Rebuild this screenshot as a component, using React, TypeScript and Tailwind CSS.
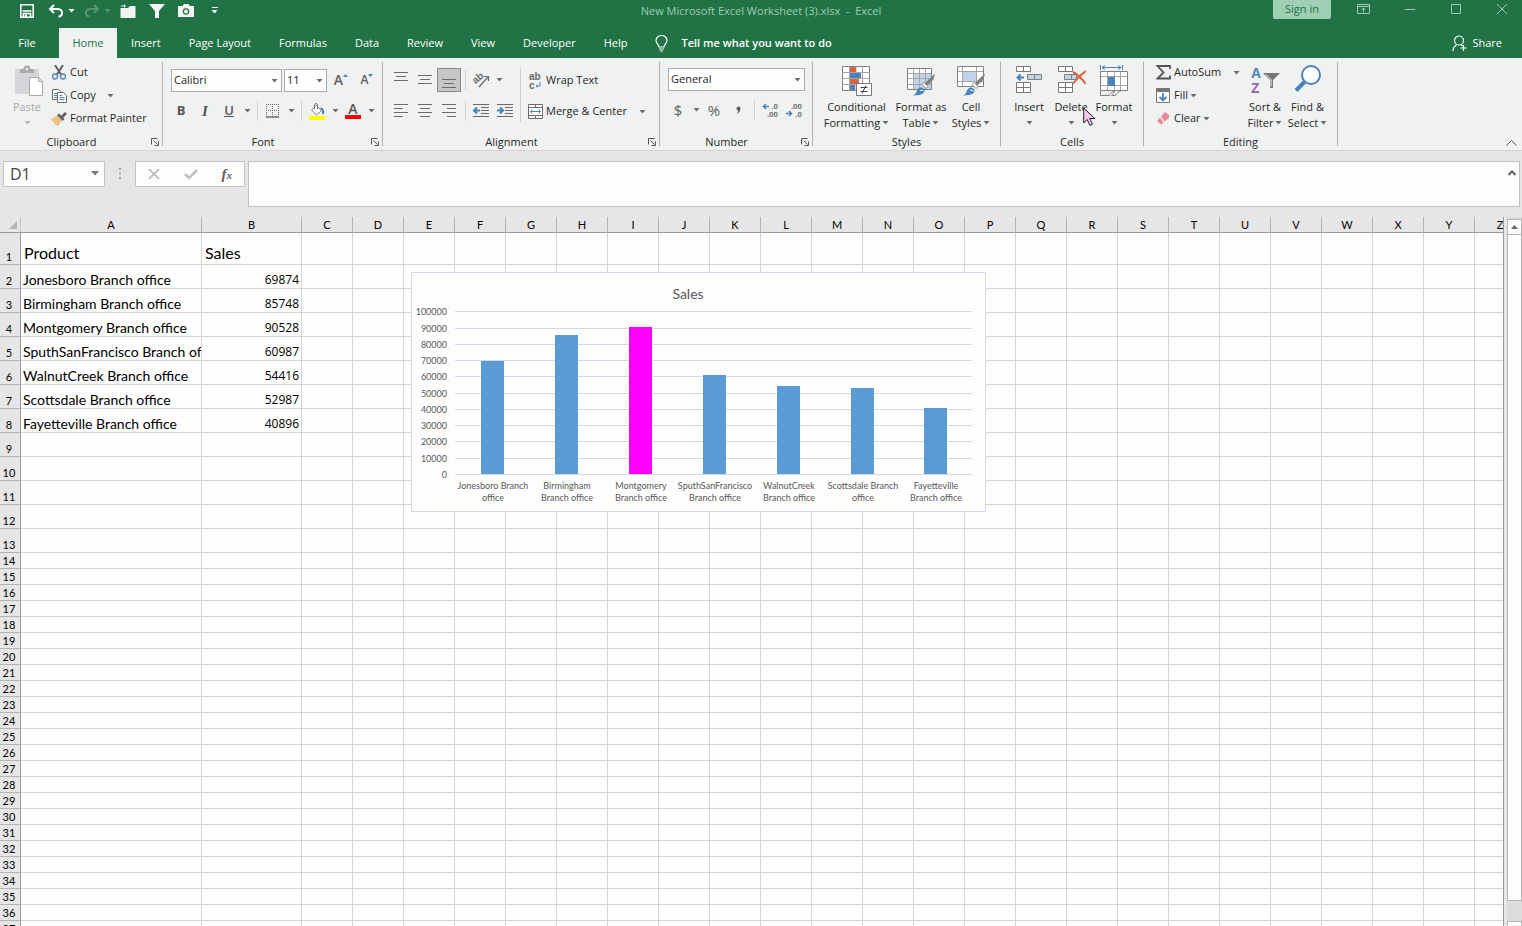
import type { ReactNode } from 'react';

interface SalesRow {
  product: string;
  sales: number;
  label: [string, string];
  highlight?: boolean;
}

const SALES: SalesRow[] = [
  { product: 'Jonesboro Branch office', sales: 69874, label: ['Jonesboro Branch', 'office'] },
  { product: 'Birmingham Branch office', sales: 85748, label: ['Birmingham', 'Branch office'] },
  { product: 'Montgomery Branch office', sales: 90528, label: ['Montgomery', 'Branch office'], highlight: true },
  { product: 'SputhSanFrancisco Branch office', sales: 60987, label: ['SputhSanFrancisco', 'Branch office'] },
  { product: 'WalnutCreek Branch office', sales: 54416, label: ['WalnutCreek', 'Branch office'] },
  { product: 'Scottsdale Branch office', sales: 52987, label: ['Scottsdale Branch', 'office'] },
  { product: 'Fayetteville Branch office', sales: 40896, label: ['Fayetteville', 'Branch office'] },
];

const COLUMNS = 'ABCDEFGHIJKLMNOPQRSTUVWXYZ'.split('');
const ROWS = Array.from({ length: 37 }, (_, i) => i + 1);
const TABS = ['Insert', 'Page Layout', 'Formulas', 'Data', 'Review', 'View', 'Developer', 'Help'];

const GRAY = '#6b6b6b';
const BLUE = '#4a82bd';

function Caret({ className = 'fill-[#6b6b6b]' }: { className?: string }) {
  return (
    <svg width="7" height="4" viewBox="0 0 7 4" className={`shrink-0 ${className}`}>
      <path d="M0.5 0h6L3.5 3.5z" />
    </svg>
  );
}

function CaretButton({ label }: { label: string }) {
  return (
    <button aria-label={label} className="flex h-6 w-3 items-center justify-center">
      <Caret />
    </button>
  );
}

function IconButton({ label, active, children }: { label: string; active?: boolean; children: ReactNode }) {
  return (
    <button
      aria-label={label}
      className={`flex h-6 w-6 items-center justify-center ${active ? 'border border-[#8a8a8a] bg-[#c6c6c6]' : ''}`}
    >
      {children}
    </button>
  );
}

function Divider() {
  return (
    <span className="flex h-5 w-2 justify-center">
      <span className="w-px bg-[#d0d0d0]" />
    </span>
  );
}

function Launcher({ label }: { label: string }) {
  return (
    <button aria-label={`${label} settings`} className="absolute right-[3px] bottom-1">
      <svg width="8" height="8" viewBox="0 0 8 8" fill="none" stroke="#555">
        <path d="M0.5 6.5v-6h6M2.5 2.5l4 4M7.5 3.5v4h-4" />
      </svg>
    </button>
  );
}

function Group({ label, width, launcher, children }: { label: string; width: string; launcher?: boolean; children: ReactNode }) {
  return (
    <>
      <section aria-label={label} className={`relative flex shrink-0 flex-col pt-[3px] ${width}`}>
        <div className="flex h-[73px]">{children}</div>
        <div className={`text-center leading-4 ${launcher ? 'pr-[19px]' : ''}`}>{label}</div>
        {launcher && <Launcher label={label} />}
      </section>
      <span className="my-1 w-px shrink-0 bg-[#b4b4b4]" />
    </>
  );
}

function SmallButton({ icon, label, caret, gap = 'gap-0.5' }: { icon: ReactNode; label: string; caret?: boolean; gap?: string }) {
  return (
    <button className={`flex h-[23px] items-center whitespace-nowrap ${gap}`}>
      <span className="flex items-center">
        <span className="flex w-[22px] justify-center">{icon}</span>
        {label}
      </span>
      {caret && <Caret />}
    </button>
  );
}

function BigButton({ icon, lines, width }: { icon: ReactNode; lines: [string, string?]; width: string }) {
  return (
    <button className={`flex flex-col items-center pt-1 whitespace-nowrap ${width}`}>
      <span className="flex h-[34px] items-start justify-center">{icon}</span>
      <span className="leading-4">{lines[0]}</span>
      <span className="flex h-4 items-center gap-0.5 leading-4">
        {lines[1]}
        <Caret />
      </span>
    </button>
  );
}

function Combo({ label, value, width }: { label: string; value: string; width: string }) {
  return (
    <span className={`relative block h-[23px] ${width}`}>
      <select aria-label={label} className="h-full w-full appearance-none border border-[#ababab] bg-[#fdfdfd] pl-0.5 text-[#262626]">
        <option>{value}</option>
      </select>
      <span className="pointer-events-none absolute top-2.5 right-1">
        <Caret />
      </span>
    </span>
  );
}

function Lines({ widths, align, top = 0 }: { widths: number[]; align: 'left' | 'center' | 'right'; top?: number }) {
  return (
    <svg width="14" height="16" viewBox="0 0 14 16" stroke={GRAY}>
      {widths.map((w, i) => {
        const x = align === 'left' ? 0 : align === 'right' ? 14 - w : (14 - w) / 2;
        const y = top + i * 4 + 0.5;
        return <path key={i} d={`M${x} ${y}h${w}`} />;
      })}
    </svg>
  );
}

function Indent({ right }: { right?: boolean }) {
  return (
    <svg width="16" height="14" viewBox="0 0 16 14" fill="none">
      <path d="M0 .5h16M8 3.5h8M8 6.5h8M8 9.5h8M0 12.5h16" stroke={GRAY} />
      <path d={right ? 'M0 6.5h5M3 3.5l3 3-3 3' : 'M1.5 6.5h5.5M4 3.5l-3 3 3 3'} stroke={BLUE} strokeWidth="2" />
    </svg>
  );
}

function DecimalIcon({ less }: { less?: boolean }) {
  return (
    <svg width="18" height="18" viewBox="0 0 18 18" className="shrink-0 font-['Liberation_Sans',sans-serif]">
      <path
        d={less ? 'M1 12.500h5.500M4 10l2.500 2.500L4 15' : 'M8 5.500H2.500M5 3L2.500 5.500 5 8'}
        fill="none"
        stroke={BLUE}
        strokeWidth="1.500"
      />
      <text x="17" y="8" textAnchor="end" fontSize="8" fontWeight="700" fill={GRAY}>{less ? '.00' : '.0'}</text>
      <text x="17" y="16" textAnchor="end" fontSize="8" fontWeight="700" fill={GRAY}>{less ? '.0' : '.00'}</text>
    </svg>
  );
}

function Brush() {
  return (
    <g>
      <path d="M29 8.5l-1.500 6-6 6-2.500-2.500 5-5z" fill="#808080" />
      <path d="M18 17.500l4 4-2 2-4-4z" fill="#fff" stroke="#808080" />
      <path d="M7 30.500c3-1 3-3 4-5 1.500-3.500 5-4 7-1.500 2 3-1 6.500-11 6.500z" fill={BLUE} />
      <path d="M14 25.500a2.500 2.500 0 0 1 3.500 1" stroke="#fff" fill="none" />
    </g>
  );
}

function ConditionalIcon() {
  return (
    <svg width="31" height="32" viewBox="0 0 31 32">
      <path d="M1.500 1.500h27v24h-27z" fill="#fff" stroke="#808080" />
      <path d="M1.500 7.500h27M1.500 13.500h27M1.500 19.500h27M8.500 1.500v24M15 1.500v24M21.500 1.500v24" stroke="#a6a6a6" />
      <path d="M9 2h6v5H9zM9 14h9v5H9z" fill="#d9623f" />
      <path d="M9 8h11v5H9zM9 20h5v5H9z" fill={BLUE} />
      <path d="M15.500 18.500h15v12h-15z" fill="#fff" stroke="#777" />
      <path d="M19.500 22.500h7M19.500 26.500h7M25 20.500l-4 8" stroke="#444" />
    </svg>
  );
}

function TableIcon() {
  return (
    <svg width="31" height="32" viewBox="0 0 31 32">
      <path d="M1.500 3.500h24v21h-24z" fill="#fff" />
      <path d="M8 9h17v15H8z" fill="#c0d3e9" />
      <path d="M1.500 8.500h24M1.500 13.500h24M1.500 19.500h24M7.500 3.500v21M13.500 3.500v21M19.500 3.500v21" stroke="#a6a6a6" />
      <path d="M1.500 3.500h24v21h-24z" fill="none" stroke="#808080" />
      <Brush />
    </svg>
  );
}

function CellStylesIcon() {
  return (
    <svg width="31" height="32" viewBox="0 0 31 32">
      <path d="M1.500 1.500h26v20h-26z" fill="#fff" />
      <path d="M1.500 6.500h26M1.500 16.500h26M6.500 1.500v20M20.500 1.500v20" stroke="#a6a6a6" />
      <path d="M7 7h13v9H7z" fill="#c0d3e9" />
      <path d="M1.500 1.500h26v20h-26z" fill="none" stroke="#808080" />
      <Brush />
    </svg>
  );
}

function InsertIcon({ remove }: { remove?: boolean }) {
  return (
    <svg width="30" height="32" viewBox="0 0 30 32">
      <path d="M2.500 1.500h14v5h-14zM9.500 1.500v5M2.500 17.500h14v10h-14zM9.500 17.500v10M2.500 22.500h14" fill="#fff" stroke="#777" />
      {remove ? (
        <>
          <path d="M8.500 9.500h12v5h-12zM15.500 9.500v5" fill="#c0d3e9" stroke="#808080" />
          <path d="M17 7c4 2 9 7 13 12M30 6c-5 3-9 8-13 12.500" stroke="#d9623f" strokeWidth="2" fill="none" />
        </>
      ) : (
        <>
          <path d="M13.500 9.500h14v5h-14zM20.500 9.500v5" fill="#c0d3e9" stroke="#808080" />
          <path d="M10 12.500H4M6.500 9.500l-3 3 3 3" stroke={BLUE} strokeWidth="2" fill="none" />
        </>
      )}
    </svg>
  );
}

function FormatIcon() {
  return (
    <svg width="30" height="32" viewBox="0 0 30 32" fill="none">
      <path d="M1.500 0v5M23.500 0v5M3 2.500h19M6 .5l-3 2 3 2M19 .5l3 2-3 2" stroke={BLUE} />
      <path d="M1.500 6.500h27v19h-27z" fill="#fff" />
      <path d="M1.500 11.500h27M1.500 20.500h27M8.500 6.500v19M15.500 6.500v19M21.500 6.500v19" stroke="#a6a6a6" />
      <path d="M1.500 6.500h27v19h-27z" stroke="#808080" />
      <path d="M9 12h7v9H9z" fill={BLUE} />
      <path d="M1.500 26v4.500h9c1-3 3-4 5-4-1 2-1 3-3 4h4c1-2 3-4 5-4" stroke="#808080" />
    </svg>
  );
}

function TitleBar() {
  return (
    <header className="relative flex h-7 items-start justify-between">
      <div className="flex h-[21px] items-center pl-[18px] text-white">
        <button aria-label="Save" className="flex w-[18px] justify-center">
          <svg width="14" height="14" viewBox="0 0 14 14" fill="none" stroke="#fff" strokeWidth="1.600">
            <path d="M.8.8h12.400v12.400H.8zM2.500 7h9M3.500 13V9.500h7V13" />
            <path d="M5 10.500h2v2.500H5z" fill="#fff" stroke="none" />
          </svg>
        </button>
        <button aria-label="Undo" className="ml-[11px] flex w-[18px] justify-center">
          <svg width="16" height="14" viewBox="0 0 16 14" fill="none" stroke="#fff" strokeWidth="2">
            <path d="M2 5h7.500c6 0 6 7.500 1 7.500M6 1L2 5l4 4" />
          </svg>
        </button>
        <button aria-label="Undo list" className="ml-[3px]"><Caret className="fill-white" /></button>
        <button aria-label="Redo" className="ml-2 flex w-[18px] justify-center opacity-25">
          <svg width="16" height="14" viewBox="0 0 16 14" fill="none" stroke="#fff" strokeWidth="2">
            <path d="M14 5H6.500c-6 0-6 7.500-1 7.500M10 1l4 4-4 4" />
          </svg>
        </button>
        <button aria-label="Redo list" className="ml-[3px] opacity-25"><Caret className="fill-white" /></button>
        <button aria-label="Open" className="ml-2 flex w-[18px] justify-center">
          <svg width="16" height="14" viewBox="0 0 16 14" fill="#f3f3f3">
            <path d="M1 4h7l2-2h5.500v12H.5V4zM1 2.500V1.500h3V0l2 2-2 2V2.500z" />
          </svg>
        </button>
        <button aria-label="Filter" className="ml-[11px] flex w-[18px] justify-center">
          <svg width="16" height="14" viewBox="0 0 16 14" fill="#f3f3f3">
            <path d="M0 0h16L10 7v7H6V7z" />
          </svg>
        </button>
        <button aria-label="Camera" className="ml-[11px] flex w-[18px] justify-center">
          <svg width="16" height="13" viewBox="0 0 16 13">
            <path d="M0 2h4.500L6 0h4.500L12 2h4v11H0z" fill="#f3f3f3" />
            <circle cx="8" cy="7.500" r="2.600" fill="none" stroke="#217346" strokeWidth="1.300" />
          </svg>
        </button>
        <button aria-label="Customize Quick Access Toolbar" className="ml-4 flex flex-col items-center gap-0.5">
          <span className="h-px w-1.5 bg-white" />
          <Caret className="fill-white" />
        </button>
      </div>
      <h1 className="absolute inset-x-0 top-0 text-center leading-[22px] whitespace-pre text-[#9fcbb1]">
        New Microsoft Excel Worksheet (3).xlsx{'  -  '}Excel
      </h1>
      <div className="relative flex items-start text-[#9fcbb1]">
        <button className="h-[19px] w-[58px] rounded-b-xs bg-[#9fd0b4] text-[#217346]">Sign in</button>
        <button aria-label="Ribbon Display Options" className="ml-[18px] flex h-[18px] w-7 items-center justify-center">
          <svg width="13" height="10" viewBox="0 0 13 10" fill="none" stroke="currentColor">
            <path d="M.5.5h12v9H.5zM.5 2.500h12M6.500 8.500V4M4.500 6l2-2 2 2" />
          </svg>
        </button>
        <button aria-label="Minimize" className="ml-[19px] flex h-[18px] w-7 items-center justify-center">
          <svg width="10" height="10" viewBox="0 0 10 10" stroke="currentColor"><path d="M0 5.500h10" /></svg>
        </button>
        <button aria-label="Maximize" className="ml-[18px] flex h-[18px] w-7 items-center justify-center">
          <svg width="10" height="10" viewBox="0 0 10 10" fill="none" stroke="currentColor"><path d="M.5.5h9v9h-9z" /></svg>
        </button>
        <button aria-label="Close" className="mr-[6px] ml-[18px] flex h-[18px] w-7 items-center justify-center">
          <svg width="10" height="10" viewBox="0 0 10 10" stroke="currentColor"><path d="M0 0l10 10M10 0L0 10" /></svg>
        </button>
      </div>
    </header>
  );
}

function TabBar() {
  return (
    <nav className="flex h-[30px] items-stretch text-white">
      <button className="w-[54px]">File</button>
      <button className="ml-[5px] w-[58px] bg-[#f0f2f1] text-[#217346]">Home</button>
      {TABS.map(tab => (
        <button key={tab} className="px-[14px]">{tab}</button>
      ))}
      <label className="flex items-center gap-[13px] pl-[14px]">
        <svg width="13" height="17" viewBox="0 0 13 17" fill="none" stroke="#fff" strokeWidth="1.200">
          <path d="M4 12c0-2.500-3-3.500-3-6.500a5.500 5 0 0 1 11 0c0 3-3 4-3 6.500zM4 14h5M5 16h3" />
        </svg>
        <input aria-label="Tell me" placeholder="Tell me what you want to do" className="w-44 bg-transparent font-semibold outline-none placeholder:text-white" />
      </label>
      <button className="ml-auto flex items-center gap-1 pr-5">
        <svg width="16" height="17" viewBox="0 0 16 17" fill="none" stroke="#fff" strokeWidth="1.200">
          <circle cx="7" cy="5.500" r="4.500" />
          <path d="M1 16c0-3 1.500-5 4-6.500M9 9.500l1.500 1.500M11.500 10v6M8.500 13h6" />
        </svg>
        Share
      </button>
    </nav>
  );
}

function Ribbon() {
  return (
    <div className="flex h-[93px] border-b border-[#d9d3d5] bg-[#f0f2f1] text-[#262626]">
      <Group label="Clipboard" width="w-[162px]" launcher>
        <button className="ml-1.5 flex w-[42px] flex-col items-center pt-1 text-[#a9a9a9]">
          <span className="h-[34px] pl-1">
            <svg width="30" height="32" viewBox="0 0 30 32">
              <path d="M1 4h24v25H1z" fill="#d5d5da" />
              <path d="M6 4h3.500a3.500 3.500 0 0 1 7 0H20v4H6z" fill="#a9a9a9" />
              <circle cx="13" cy="4" r="1.300" fill="#f0f2f1" />
              <path d="M15.500 12.500h9l4 4v14h-13zM24.500 12.500v4h4" fill="#fff" stroke="#a9a9a9" />
            </svg>
          </span>
          <span className="leading-4">Paste</span>
          <span className="flex h-4 items-center"><Caret className="fill-[#b9b9b9]" /></span>
        </button>
        <div className="flex flex-col items-start">
          <SmallButton
            label="Cut"
            icon={
              <svg width="14" height="15" viewBox="0 0 14 15" fill="none">
                <path d="M3 0l6 9.500M11 0L5 9.500" stroke="#606060" strokeWidth="2" />
                <circle cx="3" cy="11.500" r="2.500" stroke={BLUE} strokeWidth="1.300" />
                <circle cx="11" cy="11.500" r="2.500" stroke={BLUE} strokeWidth="1.300" />
              </svg>
            }
          />
          <SmallButton
            label="Copy"
            caret
            gap="gap-[11px]"
            icon={
              <svg width="15" height="14" viewBox="0 0 15 14">
                <path d="M.5.5h6l2 2v8h-8z" fill="#fff" stroke={GRAY} />
                <path d="M2 4.500h3M2 6.500h3M2 8.500h3" stroke={BLUE} />
                <path d="M5.500 3.500h6l3 3v7h-9z" fill="#fff" stroke={GRAY} />
                <path d="M7.500 6.500h3M7.500 8.500h5M7.500 10.500h5" stroke={BLUE} />
              </svg>
            }
          />
          <SmallButton
            label="Format Painter"
            icon={
              <svg width="16" height="14" viewBox="0 0 16 14">
                <path d="M0 7l6-3.500 5 5L7 14 4 12.500z" fill="#eac282" />
                <path d="M6 3l2-1.500 5.500 5.500-2 2z" fill="#606060" />
                <path d="M10 4l4-4 2 2-4 4z" fill="#606060" />
              </svg>
            }
          />
        </div>
      </Group>

      <Group label="Font" width="w-[219px]" launcher>
        <div className="flex flex-col gap-[7px] pt-[7px]">
          <div className="flex items-center gap-0.5 pl-2">
            <Combo label="Font name" value="Calibri" width="w-[111px]" />
            <Combo label="Font size" value="11" width="w-[43px]" />
            <IconButton label="Increase font size">
              <span className="text-sm font-semibold text-[#606060]">A</span>
              <svg width="5" height="3" viewBox="0 0 5 3" className="mb-2.5" fill={BLUE}><path d="M0 3h5L2.500 0z" /></svg>
            </IconButton>
            <IconButton label="Decrease font size">
              <span className="text-xs font-semibold text-[#606060]">A</span>
              <svg width="5" height="3" viewBox="0 0 5 3" className="mb-2.5" fill={BLUE}><path d="M0 0h5L2.500 3z" /></svg>
            </IconButton>
          </div>
          <div className="flex items-center pl-1.5 text-[#555]">
            <IconButton label="Bold"><span className="text-[13px] font-bold">B</span></IconButton>
            <IconButton label="Italic"><span className="font-['Liberation_Serif',serif] text-[15px] font-bold italic">I</span></IconButton>
            <IconButton label="Underline"><span className="text-[13px] font-semibold underline">U</span></IconButton>
            <CaretButton label="Underline style" />
            <Divider />
            <IconButton label="Borders">
              <svg width="14" height="14" viewBox="0 0 14 14" stroke={GRAY}>
                <path d="M0 .5h14M0 6.500h14M.5 0v13M6.500 0v13M12.500 0v13" strokeDasharray="1 1" />
                <path d="M0 13h13" strokeWidth="1.500" />
              </svg>
            </IconButton>
            <CaretButton label="Border style" />
            <Divider />
            <IconButton label="Fill color">
              <svg width="16" height="17" viewBox="0 0 16 17">
                <path d="M2.500 7l5-4.500 5 5-5 4.500z" fill="#fff" stroke="#777" />
                <path d="M5.500 6V2a1.500 1.500 0 0 1 3 0v4" fill="none" stroke="#777" />
                <path d="M11 4.500c3 0 4.500 2 4 6.500h-2c0-3 0-4-2-6.500z" fill={BLUE} />
                <path d="M0 13h16v4H0z" fill="#ff0" />
              </svg>
            </IconButton>
            <CaretButton label="Fill colors" />
            <IconButton label="Font color">
              <span className="flex flex-col items-center">
                <span className="text-sm leading-3 font-semibold">A</span>
                <span className="h-1 w-4 bg-[#f00]" />
              </span>
            </IconButton>
            <CaretButton label="Font colors" />
          </div>
        </div>
      </Group>

      <Group label="Alignment" width="w-[276px]" launcher>
        <div className="flex flex-col gap-[7px] pt-[7px] pl-1.5">
          <div className="flex items-center">
            <IconButton label="Top align"><Lines widths={[14, 10, 14]} align="center" top={0} /></IconButton>
            <IconButton label="Middle align"><Lines widths={[14, 10, 14]} align="center" top={3} /></IconButton>
            <IconButton label="Bottom align" active><Lines widths={[14, 10, 14]} align="center" top={7} /></IconButton>
            <Divider />
            <IconButton label="Orientation">
              <svg width="24" height="24" viewBox="0 0 24 24" fill="none" stroke={GRAY} strokeWidth="1.200" className="shrink-0 font-['Liberation_Sans',sans-serif]">
                <text x="5" y="14" fontSize="10" fontWeight="700" fill={GRAY} stroke="none" transform="rotate(-40 9 13)">ab</text>
                <path d="M10 19L19 9M15 8.500h4.500V13" />
              </svg>
            </IconButton>
            <CaretButton label="Orientation options" />
          </div>
          <div className="flex items-center">
            <IconButton label="Align left"><Lines widths={[14, 9, 14, 9]} align="left" top={1} /></IconButton>
            <IconButton label="Center"><Lines widths={[14, 10, 14, 10]} align="center" top={1} /></IconButton>
            <IconButton label="Align right"><Lines widths={[14, 9, 14, 9]} align="right" top={1} /></IconButton>
            <Divider />
            <IconButton label="Decrease indent"><Indent /></IconButton>
            <IconButton label="Increase indent"><Indent right /></IconButton>
          </div>
        </div>
        <span className="mx-[3px] mt-[7px] h-[54px] w-px bg-[#d0d0d0]" />
        <div className="flex flex-col items-start gap-2 pt-2">
          <SmallButton
            label="Wrap Text"
            icon={
              <svg width="16" height="22" viewBox="0 0 16 22" className="shrink-0 font-['Liberation_Sans',sans-serif]">
                <text x="2" y="10" fontSize="10" fontWeight="700" fill={GRAY}>ab</text>
                <text x="2" y="19" fontSize="10" fontWeight="700" fill={GRAY}>c</text>
                <path d="M13 12v4H9M10.500 14.500L9 16l1.500 1.500" fill="none" stroke={BLUE} />
              </svg>
            }
          />
          <SmallButton
            label="Merge & Center"
            caret
            gap="gap-3"
            icon={
              <svg width="15" height="15" viewBox="0 0 15 15" fill="none">
                <path d="M.5.5h14v14H.5zM.5 3.500h14M.5 11.500h14M7.500.5v3M7.500 11.500v3" stroke={GRAY} fill="#fff" />
                <path d="M2.500 7.500h10M4.500 5.500l-2 2 2 2M10.500 5.500l2 2-2 2" stroke={BLUE} />
              </svg>
            }
          />
        </div>
      </Group>

      <Group label="Number" width="w-[152px]" launcher>
        <div className="flex flex-col gap-[7px] pt-[7px]">
          <div className="pl-2">
            <Combo label="Number format" value="General" width="w-[137px]" />
          </div>
          <div className="flex items-center pl-1.5 text-[#606060]">
            <IconButton label="Accounting format"><span className="text-[15px]">$</span></IconButton>
            <CaretButton label="Currency list" />
            <IconButton label="Percent style"><span className="text-[15px]">%</span></IconButton>
            <IconButton label="Comma style">
              <svg width="5" height="8" viewBox="0 0 5 8" fill="#606060"><path d="M.5 2.500a2 2 0 0 1 4 0C4.500 5 3 7 .5 8 2 6.500 2 5.500 2 4.500 1 4.500.5 3.500.5 2.500z" /></svg>
            </IconButton>
            <Divider />
            <IconButton label="Increase decimal"><DecimalIcon /></IconButton>
            <IconButton label="Decrease decimal"><DecimalIcon less /></IconButton>
          </div>
        </div>
      </Group>

      <Group label="Styles" width="w-[187px]">
        <div className="flex pl-1.5">
          <BigButton icon={<ConditionalIcon />} lines={['Conditional', 'Formatting']} width="w-[75px]" />
          <BigButton icon={<TableIcon />} lines={['Format as', 'Table']} width="w-[54px]" />
          <BigButton icon={<CellStylesIcon />} lines={['Cell', 'Styles']} width="w-[46px]" />
        </div>
      </Group>

      <Group label="Cells" width="w-[142px]">
        <div className="flex pl-[7px]">
          <BigButton icon={<InsertIcon />} lines={['Insert']} width="w-[42px]" />
          <div className="relative flex">
            <BigButton icon={<InsertIcon remove />} lines={['Delete']} width="w-[42px]" />
            <svg width="13" height="20" viewBox="0 0 13 20" className="absolute top-[46px] left-[33px]">
              <path d="M.7 1v15l3.500-3.500 2.800 6 2.500-1.200-2.700-5.800h5z" fill="#f9c4ee" stroke="#222" />
            </svg>
          </div>
          <BigButton icon={<FormatIcon />} lines={['Format']} width="w-[44px]" />
        </div>
      </Group>

      <Group label="Editing" width="w-[193px]">
        <div className="flex w-[100px] flex-col items-start pl-2">
          <SmallButton
            label="AutoSum"
            caret
            gap="gap-3"
            icon={
              <svg width="15" height="15" viewBox="0 0 15 15" fill="none" stroke="#555" strokeWidth="1.800">
                <path d="M14 4V1H1.500l6 6.500-6 6H14v-3" />
              </svg>
            }
          />
          <SmallButton
            label="Fill"
            caret
            icon={
              <svg width="14" height="15" viewBox="0 0 14 15" fill="none">
                <path d="M.5.5h13v14H.5z" fill="#fff" stroke="#777" />
                <path d="M0 0h14v4H0z" fill="#777" />
                <path d="M7 5v7M3.500 9L7 12.500 10.500 9" stroke={BLUE} strokeWidth="1.800" />
              </svg>
            }
          />
          <SmallButton
            label="Clear"
            caret
            icon={
              <svg width="14" height="13" viewBox="0 0 14 13">
                <path d="M5 4.500L9 0l4 3v3L8.500 9.500z" fill="#e8899a" />
                <path d="M4 5.500l3.500 5L5 12.500 1 9z" fill="#e8899a" />
              </svg>
            }
          />
        </div>
        <BigButton
          icon={
            <svg width="30" height="32" viewBox="0 0 30 32" className="shrink-0 font-['Liberation_Sans',sans-serif]">
              <text x="1" y="13" fontSize="14" fontWeight="700" fill={BLUE}>A</text>
              <text x="1" y="28" fontSize="14" fontWeight="700" fill="#9663b8">Z</text>
              <path d="M13 8h17l-7 7v8h-3v-8z" fill="#777" />
              <path d="M16 9.500l5 5v7" stroke="#f0f2f1" fill="none" />
            </svg>
          }
          lines={['Sort &', 'Filter']}
          width="w-[42px]"
        />
        <BigButton
          icon={
            <svg width="28" height="29" viewBox="0 0 28 29" fill="none" stroke={BLUE}>
              <circle cx="17" cy="10" r="9" fill="#fff" strokeWidth="2" />
              <path d="M10.500 17L2 25.500" strokeWidth="4" />
            </svg>
          }
          lines={['Find &', 'Select']}
          width="w-[43px]"
        />
      </Group>
      <button aria-label="Collapse the Ribbon" className="mt-auto mr-[5px] mb-1 ml-auto">
        <svg width="11" height="6" viewBox="0 0 11 6" fill="none" stroke="#555"><path d="M.5 5.500l5-5 5 5" /></svg>
      </button>
    </div>
  );
}

function FormulaBar() {
  return (
    <div className="flex items-start pt-2.5 pr-0.5 pb-2.5 pl-[3px]">
      <span className="relative h-[26px] w-[102px]">
        <input aria-label="Name box" defaultValue="D1" className="h-full w-full border border-[#c3c3c3] bg-[#fdfdfd] pl-1.5 text-base text-[#444] outline-none" />
        <svg width="8" height="5" viewBox="0 0 8 5" fill="#777" className="pointer-events-none absolute top-2.5 right-1.5"><path d="M0 0h8L4 4.500z" /></svg>
      </span>
      <svg width="2" height="11" viewBox="0 0 2 11" className="mx-[14px] mt-[7px]" fill="#a6a6a6">
        <path d="M0 0h2v2H0zM0 4.500h2v2H0zM0 9h2v2H0z" />
      </svg>
      <div className="flex h-[26px] w-[110px] items-center justify-around border border-[#c3c3c3] bg-[#fdfdfd]">
        <button aria-label="Cancel">
          <svg width="12" height="10" viewBox="0 0 12 10" stroke="#c0c0c0" strokeWidth="2"><path d="M1 0l10 10M11 0L1 10" /></svg>
        </button>
        <button aria-label="Enter">
          <svg width="14" height="10" viewBox="0 0 14 10" fill="none" stroke="#c0c0c0" strokeWidth="2.500"><path d="M1 5l4 4 8-8" /></svg>
        </button>
        <button aria-label="Insert function" className="font-['Liberation_Serif',serif] text-[15px] leading-4 font-bold text-[#606060] italic">
          f<span className="text-[11px]">x</span>
        </button>
      </div>
      <div className="relative ml-[3px] flex-1">
        <textarea aria-label="Formula" className="block h-[46px] w-full resize-none border border-[#c3c3c3] bg-[#fdfdfd] outline-none" />
        <button aria-label="Collapse formula bar" className="absolute top-[9px] right-1">
          <svg width="8" height="6" viewBox="0 0 8 6" fill="none" stroke="#666" strokeWidth="2" className="block"><path d="M.5 5L4 1.500 7.500 5" /></svg>
        </button>
      </div>
    </div>
  );
}

function SalesChart() {
  return (
    <svg
      role="img"
      aria-label="Sales by branch"
      width="575"
      height="240"
      viewBox="0 0 575 240"
      className="absolute top-[55px] left-[411px] font-[Lato,sans-serif]"
      fill="#595959"
    >
      <rect x=".5" y=".5" width="574" height="239" fill="#fdfdfd" stroke="#d0dae6" />
      <text x="277" y="27" textAnchor="middle" fontSize="14">Sales</text>
      {Array.from({ length: 11 }, (_, i) => {
        const y = Math.round(202 - i * 16.27);
        return (
          <g key={i}>
            <path d={`M44 ${y + 0.5}h517`} stroke="#d0dae6" />
            <text x="36" y={y + 4} textAnchor="end" fontSize="9">{i * 10000}</text>
          </g>
        );
      })}
      {SALES.map((row, i) => {
        const height = Math.round((row.sales * 162) / 100000);
        const center = Math.round(82 + i * 73.9);
        return (
          <g key={row.product}>
            <rect x={center - 12} y={202 - height} width="23" height={height} fill={row.highlight ? '#ff00ff' : '#5b9bd5'} />
            <text x={center} y="217" textAnchor="middle" fontSize="9">{row.label[0]}</text>
            <text x={center} y="229" textAnchor="middle" fontSize="9">{row.label[1]}</text>
          </g>
        );
      })}
    </svg>
  );
}

function cellText(row: number, column: string) {
  if (row === 1) return column === 'A' ? 'Product' : column === 'B' ? 'Sales' : '';
  const entry = SALES[row - 2];
  if (!entry) return '';
  return column === 'A' ? entry.product : column === 'B' ? entry.sales : '';
}

function cellStyle(row: number, column: string) {
  if (row === 1) return 'pl-[3px] pb-px text-base leading-5';
  if (row < 14 && column === 'B') return "px-0.5 pb-px text-right font-['Open_Sans',sans-serif] text-xs leading-[15px]";
  if (row < 14) return 'px-0.5 pb-px text-sm leading-[15px]';
  return 'p-0 leading-[15px]';
}

function Sheet() {
  return (
    <div className="relative min-w-0 flex-1 overflow-hidden border-r border-[#999] bg-[#fdfdfd]">
      <table className="w-px table-fixed border-separate border-spacing-0 font-[Lato,sans-serif] text-black">
        <colgroup>
          <col className="w-[21px]" />
          {COLUMNS.map(c => (
            <col key={c} className={c === 'A' ? 'w-[181px]' : c === 'B' ? 'w-[100px]' : 'w-[51px]'} />
          ))}
        </colgroup>
        <thead className="bg-[#e6e6e6]">
          <tr className="h-4">
            <th aria-label="Select all" className="border-r border-b border-r-[#c3c3c3] border-b-[#999] p-0">
              <svg width="8" height="8" viewBox="0 0 8 8" fill="#b4b4b4" className="mr-[3px] ml-auto"><path d="M8 0v8H0z" /></svg>
            </th>
            {COLUMNS.map(c => (
              <th key={c} scope="col" className="border-r border-b border-r-[#b4b4b4] border-b-[#999] p-0 text-[11px] leading-[15px] font-normal">{c}</th>
            ))}
          </tr>
        </thead>
        <tbody>
          {ROWS.map(row => (
            <tr key={row} className={row === 1 ? 'h-8' : row < 14 ? 'h-6' : 'h-4'}>
              <th scope="row" className="border-r border-b border-r-[#999] border-b-[#b4b4b4] bg-[#e6e6e6] p-0 pr-0.5 align-bottom text-[11px] leading-[15px] font-normal">{row}</th>
              {COLUMNS.map(c => (
                <td key={c} className={`overflow-hidden border-r border-b border-[#d4d4d4] align-bottom whitespace-nowrap ${cellStyle(row, c)}`}>
                  {cellText(row, c)}
                </td>
              ))}
            </tr>
          ))}
        </tbody>
      </table>
      <SalesChart />
    </div>
  );
}

function ScrollBar() {
  return (
    <div className="ml-[3px] flex w-[15px] flex-col bg-[#dcdcdc] pt-0.5">
      <button aria-label="Scroll up" className="flex h-4 shrink-0 items-center justify-center border border-[#b4b4b4] bg-[#fdfdfd]">
        <svg width="7" height="4" viewBox="0 0 7 4" fill="#666"><path d="M0 4h7L3.500 0z" /></svg>
      </button>
      <div className="-mt-px flex-1 border border-[#b4b4b4] bg-[#fdfdfd]" />
      <div className="mt-5 h-[5px] shrink-0 border border-b-0 border-[#b4b4b4] bg-[#fdfdfd]" />
    </div>
  );
}

export default function App() {
  return (
    <div className="flex h-screen flex-col overflow-hidden bg-[#e6e6e6] font-['Open_Sans',sans-serif] text-[11px]">
      <div className="bg-[#217346]">
        <TitleBar />
        <TabBar />
      </div>
      <Ribbon />
      <FormulaBar />
      <main className="flex min-h-0 flex-1">
        <Sheet />
        <ScrollBar />
      </main>
    </div>
  );
}
